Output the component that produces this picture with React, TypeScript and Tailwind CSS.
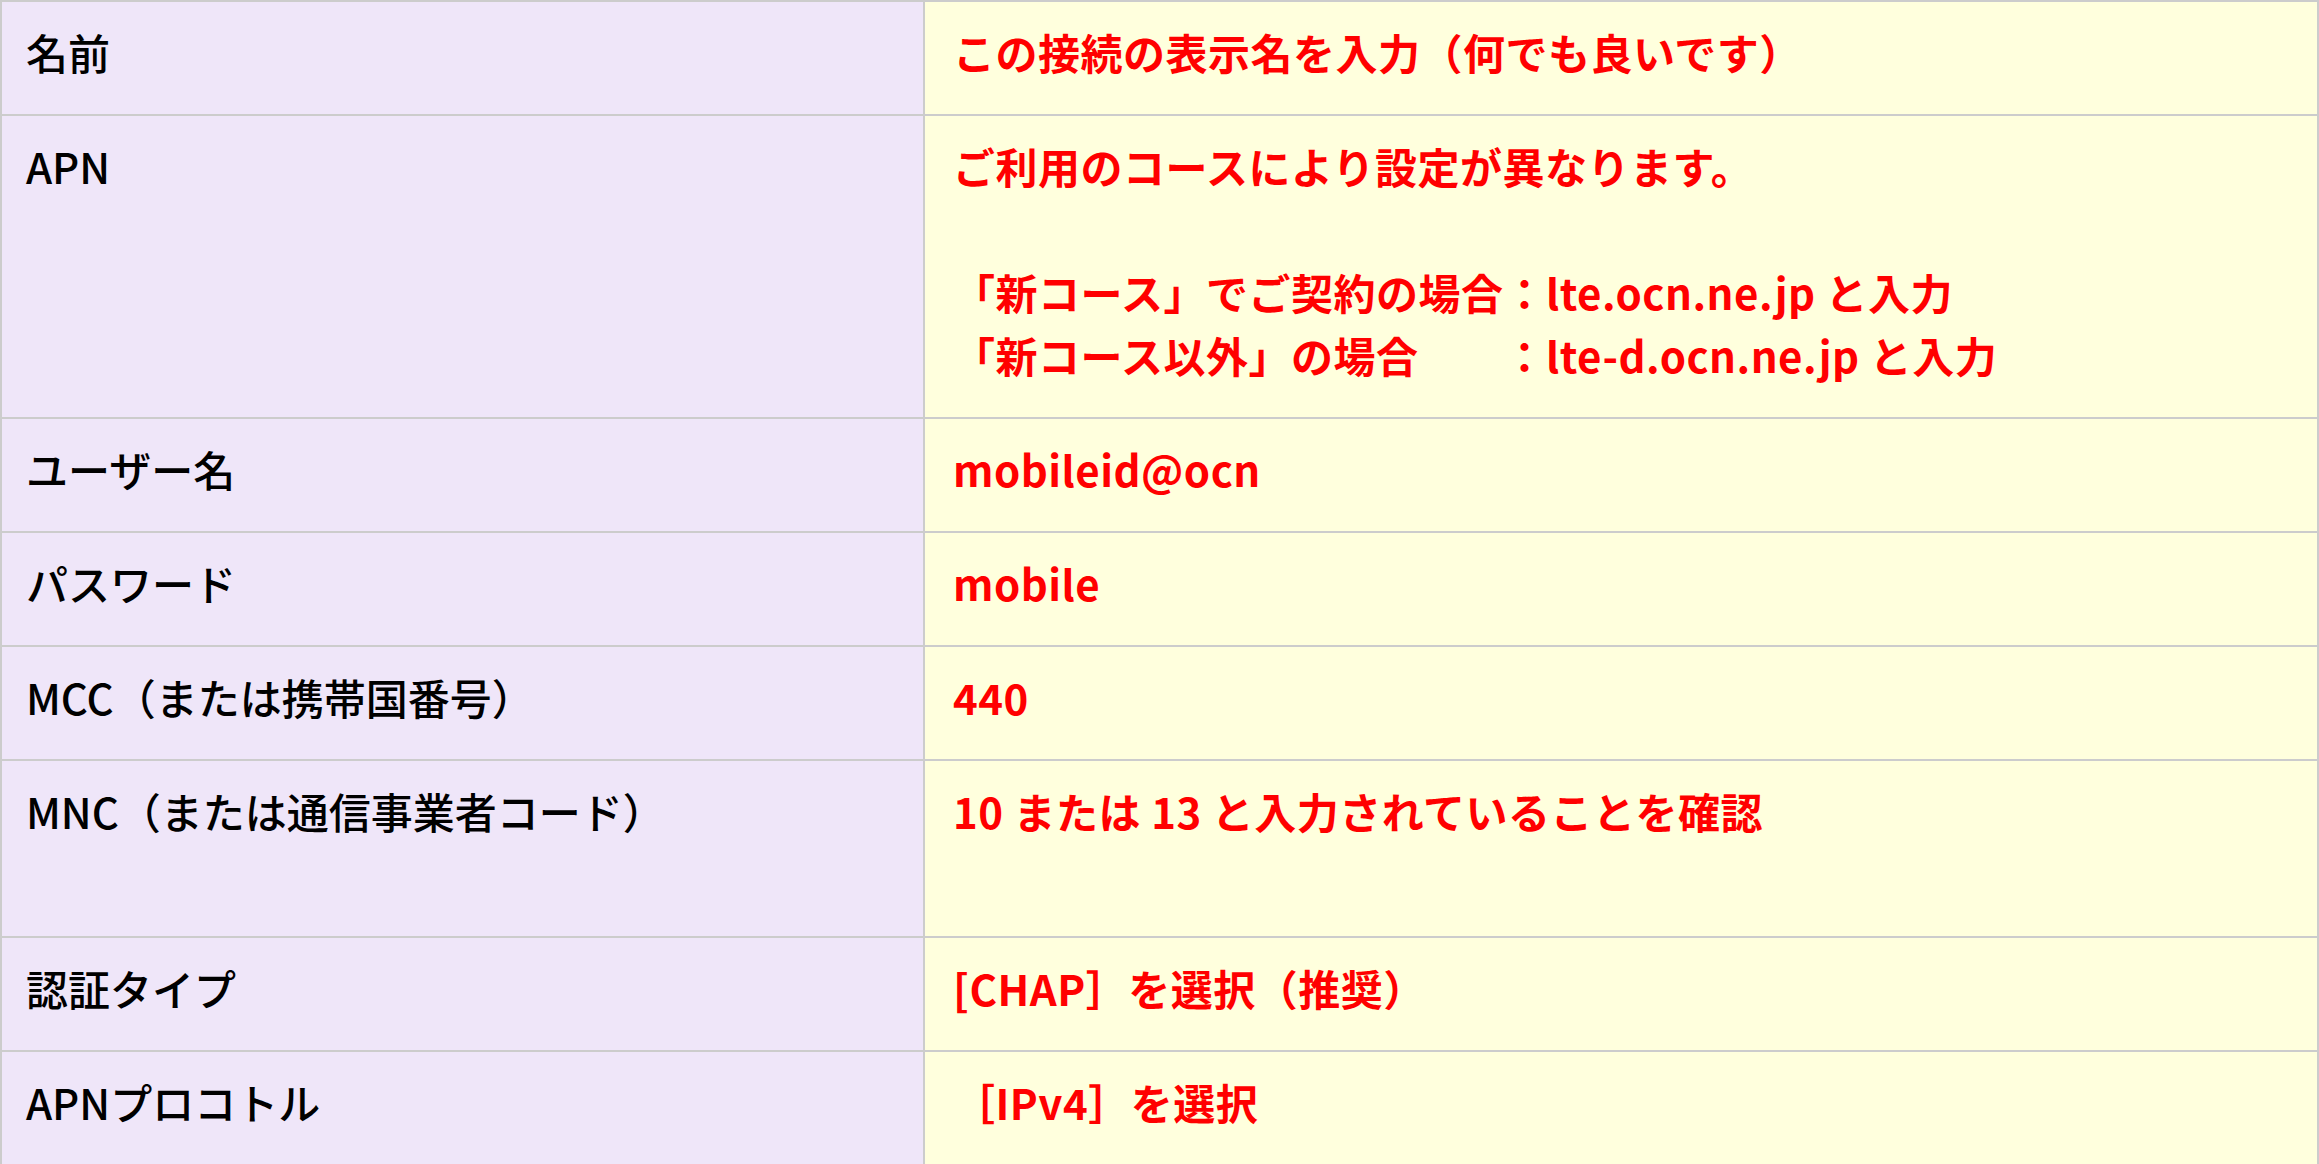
type Row = {
  label: string;
  value: React.ReactNode;
};

const rows: Row[] = [
  { label: '名前', value: 'この接続の表示名を入力（何でも良いです）' },
  {
    label: 'APN',
    value: (
      <>
        ご利用のコースにより設定が異なります。
        <br />
        <br />
        「新コース」でご契約の場合：lte.ocn.ne.jp と入力
        <br />
        「新コース以外」の場合　　：lte-d.ocn.ne.jp と入力
      </>
    ),
  },
  { label: 'ユーザー名', value: 'mobileid@ocn' },
  { label: 'パスワード', value: 'mobile' },
  { label: 'MCC（または携帯国番号）', value: '440' },
  {
    label: 'MNC（または通信事業者コード）',
    value: (
      <>
        10 または 13 と入力されていることを確認
        <br />
        <br />
      </>
    ),
  },
  { label: '認証タイプ', value: '[CHAP］を選択（推奨）' },
  { label: 'APNプロコトル', value: '［IPv4］を選択' },
];

export default function App() {
  return (
    <div className="w-[2319px] h-[1164px] overflow-hidden bg-white font-['Noto_Sans_CJK_JP','Noto_Sans',sans-serif] text-[42px] leading-[63px]">
      <table className="w-full table-fixed border-collapse">
        <colgroup>
          <col className="w-[923px]" />
          <col />
        </colgroup>
        <tbody>
          {rows.map((row, i) => (
            <tr key={i}>
              <td className="align-top border-2 border-[#cccccc] bg-[#efe6f9] pl-[24px] pr-4 pt-[18px] pb-[31px] text-black font-medium">
                {row.label}
              </td>
              <td className="align-top border-2 border-[#cccccc] bg-[#ffffdd] pl-[28px] pr-4 pt-[18px] pb-[31px] text-[#ff0000] font-semibold tracking-[0.5px] whitespace-pre">
                {row.value}
              </td>
            </tr>
          ))}
        </tbody>
      </table>
    </div>
  );
}
